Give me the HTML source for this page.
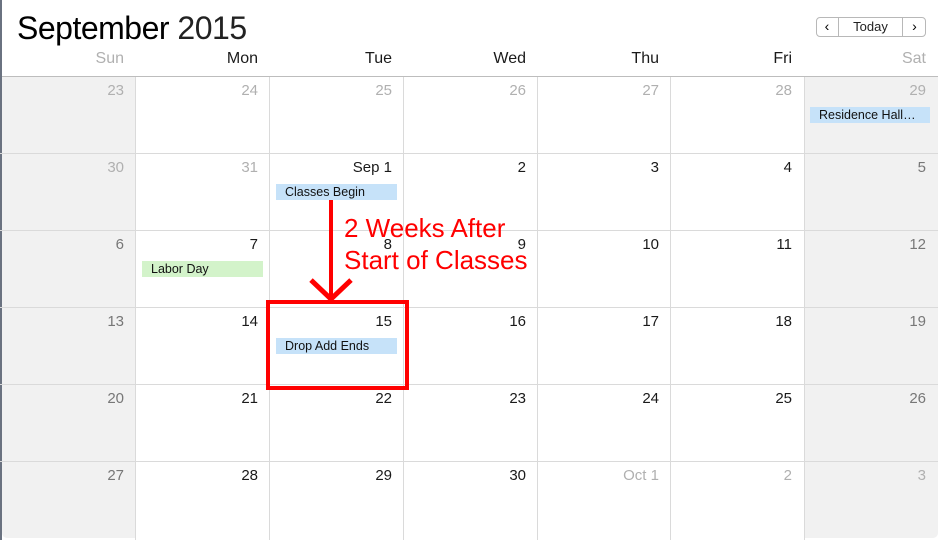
<!DOCTYPE html>
<html><head><meta charset="utf-8"><style>
*{margin:0;padding:0;box-sizing:border-box}
body{width:938px;height:540px;overflow:hidden;background:#fff;font-family:"Liberation Sans",Arial,sans-serif;position:relative}
.a{position:absolute}
.n{position:absolute;font-size:15px;line-height:20px;text-align:right;width:100px;color:#1a1a1a}
.h{position:absolute;top:49px;font-size:16px;line-height:20px;text-align:right;width:100px;color:#1a1a1a}
.n.g,.h.g{color:#b0b0b0}
.n.w{color:#777}
.ev{position:absolute;height:16px;font-size:12.5px;line-height:16px;padding-left:9px;color:#111;background:#c6e2f9;white-space:nowrap;overflow:hidden}
.vl{position:absolute;top:77px;width:1px;height:463px;background:#dadada}
.hl{position:absolute;left:0;width:938px;height:1px;background:#dadada}
</style></head><body>
<div class="a" style="left:0;top:0;width:2px;height:540px;background:#6a7280"></div>
<div class="a" style="left:2px;top:77px;width:134px;height:461px;background:#f1f1f1;border-bottom-left-radius:5px"></div>
<div class="a" style="left:805px;top:77px;width:133px;height:461px;background:#f1f1f1;border-bottom-right-radius:5px"></div>
<div class="a" style="left:17px;top:8px;font-size:32px;line-height:40px;color:#000;letter-spacing:-0.5px">September <span style="font-weight:300;color:#222">2015</span></div>

<div class="a" style="left:816px;top:17px;width:110px;height:20px;border:1px solid #b8b8b8;border-radius:4px;background:#fff"></div>
<div class="a" style="left:838px;top:17px;width:1px;height:20px;background:#b8b8b8"></div>
<div class="a" style="left:902px;top:17px;width:1px;height:20px;background:#b8b8b8"></div>
<div class="a" style="left:816px;top:17px;width:22px;height:20px;font-size:14px;line-height:19px;text-align:center">&#8249;</div>
<div class="a" style="left:839px;top:17px;width:63px;height:20px;font-size:13px;line-height:19px;text-align:center;color:#222">Today</div>
<div class="a" style="left:903px;top:17px;width:23px;height:20px;font-size:14px;line-height:19px;text-align:center">&#8250;</div>

<div class="h g" style="left:24px">Sun</div>
<div class="h" style="left:158px">Mon</div>
<div class="h" style="left:292px">Tue</div>
<div class="h" style="left:426px">Wed</div>
<div class="h" style="left:559px">Thu</div>
<div class="h" style="left:692px">Fri</div>
<div class="h g" style="left:826px">Sat</div>

<div class="a" style="left:2px;top:76px;width:936px;height:1px;background:#bdbdbd"></div>
<div class="vl" style="left:135px"></div><div class="vl" style="left:269px"></div><div class="vl" style="left:403px"></div><div class="vl" style="left:537px"></div><div class="vl" style="left:670px"></div><div class="vl" style="left:804px"></div>
<div class="hl" style="top:153px"></div><div class="hl" style="top:230px"></div><div class="hl" style="top:307px"></div><div class="hl" style="top:384px"></div><div class="hl" style="top:461px"></div>

<div class="n g" style="left:24px;top:81px">23</div>
<div class="n g" style="left:158px;top:81px">24</div>
<div class="n g" style="left:292px;top:81px">25</div>
<div class="n g" style="left:426px;top:81px">26</div>
<div class="n g" style="left:559px;top:81px">27</div>
<div class="n g" style="left:692px;top:81px">28</div>
<div class="n g" style="left:826px;top:81px">29</div>
<div class="n g" style="left:24px;top:158px">30</div>
<div class="n g" style="left:158px;top:158px">31</div>
<div class="n" style="left:292px;top:158px">Sep 1</div>
<div class="n" style="left:426px;top:158px">2</div>
<div class="n" style="left:559px;top:158px">3</div>
<div class="n" style="left:692px;top:158px">4</div>
<div class="n w" style="left:826px;top:158px">5</div>
<div class="n w" style="left:24px;top:235px">6</div>
<div class="n" style="left:158px;top:235px">7</div>
<div class="n" style="left:292px;top:235px">8</div>
<div class="n" style="left:426px;top:235px">9</div>
<div class="n" style="left:559px;top:235px">10</div>
<div class="n" style="left:692px;top:235px">11</div>
<div class="n w" style="left:826px;top:235px">12</div>
<div class="n w" style="left:24px;top:312px">13</div>
<div class="n" style="left:158px;top:312px">14</div>
<div class="n" style="left:292px;top:312px">15</div>
<div class="n" style="left:426px;top:312px">16</div>
<div class="n" style="left:559px;top:312px">17</div>
<div class="n" style="left:692px;top:312px">18</div>
<div class="n w" style="left:826px;top:312px">19</div>
<div class="n w" style="left:24px;top:389px">20</div>
<div class="n" style="left:158px;top:389px">21</div>
<div class="n" style="left:292px;top:389px">22</div>
<div class="n" style="left:426px;top:389px">23</div>
<div class="n" style="left:559px;top:389px">24</div>
<div class="n" style="left:692px;top:389px">25</div>
<div class="n w" style="left:826px;top:389px">26</div>
<div class="n w" style="left:24px;top:466px">27</div>
<div class="n" style="left:158px;top:466px">28</div>
<div class="n" style="left:292px;top:466px">29</div>
<div class="n" style="left:426px;top:466px">30</div>
<div class="n g" style="left:559px;top:466px">Oct 1</div>
<div class="n g" style="left:692px;top:466px">2</div>
<div class="n g" style="left:826px;top:466px">3</div>

<div class="ev" style="left:810px;top:107px;width:120px">Residence Hall…</div>
<div class="ev" style="left:276px;top:184px;width:121px">Classes Begin</div>
<div class="ev" style="left:142px;top:261px;width:121px;background:#d3f3ca">Labor Day</div>
<div class="ev" style="left:276px;top:338px;width:121px">Drop Add Ends</div>

<svg class="a" style="left:0;top:0" width="938" height="540">
<line x1="331" y1="200" x2="331" y2="298" stroke="#ff0000" stroke-width="4"/>
<polyline points="311,280 331,299 351,280" fill="none" stroke="#ff0000" stroke-width="5"/>
<rect x="268" y="302" width="139" height="86" fill="none" stroke="#ff0000" stroke-width="4"/>
</svg>
<div class="a" style="left:344px;top:212px;font-size:26px;line-height:32px;color:#ff0000">2 Weeks After<br>Start of Classes</div>
</body></html>
